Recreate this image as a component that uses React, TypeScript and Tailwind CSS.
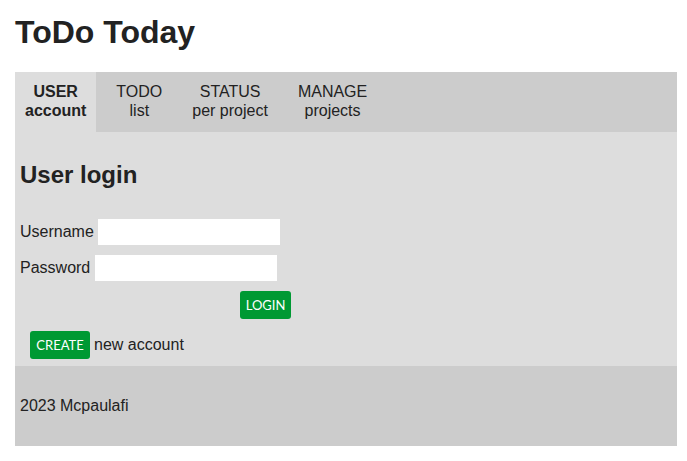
import React from "react";

export default function App() {
  const tabs = [
    { a: "USER", b: "account", active: true },
    { a: "TODO", b: "list" },
    { a: "STATUS", b: "per project" },
    { a: "MANAGE", b: "projects" },
  ];
  return (
    <div className="min-h-[461px] w-[687px] bg-white pl-[15px] pr-[10px] text-[#222] [font-family:'Liberation_Sans',Arial,sans-serif]">
      <h1 className="pt-[14px] text-[32px] font-bold leading-[37px]">ToDo Today</h1>
      <nav className="mt-[21px] flex h-[60px] bg-[#cccccc]">
        {tabs.map((t, i) => (
          <div
            key={t.a}
            className={
              "flex flex-col items-center justify-center px-[10px] pb-[2px] text-[16px] leading-[19px] " +
              (i > 0 ? "ml-[10px] " : "") +
              (t.active ? "bg-[#dddddd] font-bold" : "")
            }
          >
            <span>{t.a}</span>
            <span>{t.b}</span>
          </div>
        ))}
      </nav>
      <main className="h-[234px] bg-[#dddddd] px-[5px] pt-[29px]">
        <h2 className="text-[24px] font-bold leading-[28px]">User login</h2>
        <div className="mt-[30px] flex items-center text-[16px]">
          <span>Username</span>
          <input className="ml-[4px] h-[26px] w-[182px] bg-white outline-none" />
        </div>
        <div className="mt-[10px] flex items-center text-[16px]">
          <span>Password</span>
          <input type="password" className="ml-[5px] h-[26px] w-[182px] bg-white outline-none" />
        </div>
        <div className="mt-[10px] flex">
          <button className="ml-[220px] h-[28px] w-[51px] rounded-[3px] bg-[#009933] pt-[1px] text-[13px] text-white [font-family:Lato,sans-serif]">
            LOGIN
          </button>
        </div>
        <div className="mt-[12px] flex items-center text-[16px]">
          <button className="ml-[10px] h-[28px] w-[60px] rounded-[3px] bg-[#009933] pt-[2px] text-[13px] text-white [font-family:Lato,sans-serif]">
            CREATE
          </button>
          <span className="ml-[4px]">new account</span>
        </div>
      </main>
      <footer className="flex h-[80px] items-center bg-[#cccccc] px-[5px] text-[16px]">
        2023 Mcpaulafi
      </footer>
    </div>
  );
}
